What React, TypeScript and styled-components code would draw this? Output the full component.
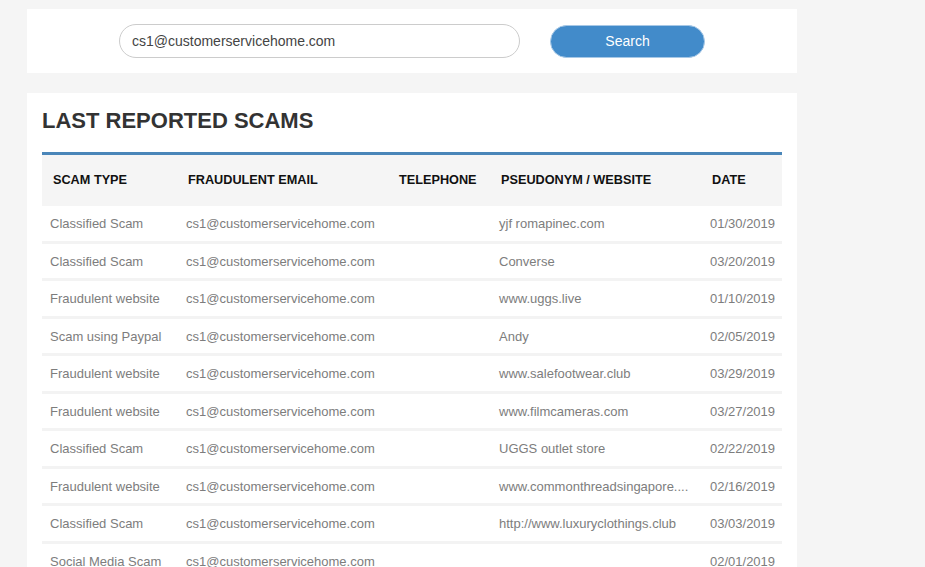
import React from "react";
import styled, { createGlobalStyle } from "styled-components";

const Global = createGlobalStyle`
  html, body { margin: 0; padding: 0; background: #f5f5f5; }
  body { font-family: "Liberation Sans", Arial, sans-serif; }
`;

const Page = styled.div`
  padding: 9px 0 0 27px;
  width: 770px;
  display: flex;
  flex-direction: column;
  gap: 20px;
`;

const SearchCard = styled.div`
  background: #fff;
  height: 64px;
  display: flex;
  align-items: center;
  justify-content: center;
  gap: 30px;
`;

const SearchInput = styled.input`
  box-sizing: border-box;
  width: 401px;
  height: 34px;
  border: 1px solid #cccccc;
  border-radius: 17px;
  padding: 0 12px;
  font: 14px "Liberation Sans", Arial, sans-serif;
  color: #444;
  outline: none;
  background: #fff;
`;

const SearchButton = styled.button`
  box-sizing: border-box;
  width: 155px;
  height: 33px;
  background: #428bca;
  border: 1px solid #a7c8e6;
  border-radius: 17px;
  color: #fff;
  font: 14px "Liberation Sans", Arial, sans-serif;
  cursor: pointer;
`;

const ListCard = styled.div`
  background: #fff;
  padding: 15px 15px 20px;
`;

const Title = styled.h2`
  margin: 0 0 19px;
  font-size: 22px;
  line-height: 25px;
  font-weight: bold;
  color: #333;
`;

const Table = styled.table`
  width: 740px;
  border-collapse: collapse;
  table-layout: fixed;
  border-top: 3px solid #4a86b9;
`;

const HeadRow = styled.tr`
  background: #f5f5f5;
`;

const Th = styled.th<{ $first?: boolean }>`
  padding: 18px 10px 18px ${(p) => (p.$first ? 11 : 10)}px;
  line-height: 15px;
  text-align: left;
  font-size: 12.7px;
  font-weight: bold;
  color: #111;
  text-transform: uppercase;
  white-space: nowrap;
`;

const Row = styled.tr`
  border-bottom: 3px solid #f3f3f3;
`;

const Td = styled.td`
  padding: 11px 8px 9.5px;
  line-height: 14px;
  font-size: 13px;
  color: #7d7d7d;
  white-space: nowrap;
  overflow: hidden;
`;

const rows = [
  ["Classified Scam", "yjf romapinec.com", "01/30/2019"],
  ["Classified Scam", "Converse", "03/20/2019"],
  ["Fraudulent website", "www.uggs.live", "01/10/2019"],
  ["Scam using Paypal", "Andy", "02/05/2019"],
  ["Fraudulent website", "www.salefootwear.club", "03/29/2019"],
  ["Fraudulent website", "www.filmcameras.com", "03/27/2019"],
  ["Classified Scam", "UGGS outlet store", "02/22/2019"],
  ["Fraudulent website", "www.commonthreadsingapore....", "02/16/2019"],
  ["Classified Scam", "http://www.luxuryclothings.club", "03/03/2019"],
  ["Social Media Scam", "", "02/01/2019"],
];

const EMAIL = "cs1@customerservicehome.com";

export default function App() {
  return (
    <>
      <Global />
      <Page>
        <SearchCard>
          <SearchInput defaultValue={EMAIL} />
          <SearchButton>Search</SearchButton>
        </SearchCard>
        <ListCard>
          <Title>LAST REPORTED SCAMS</Title>
          <Table>
            <colgroup>
              <col style={{ width: 136 }} />
              <col style={{ width: 211 }} />
              <col style={{ width: 102 }} />
              <col style={{ width: 211 }} />
              <col style={{ width: 80 }} />
            </colgroup>
            <thead>
              <HeadRow>
                <Th $first>Scam Type</Th>
                <Th>Fraudulent Email</Th>
                <Th>Telephone</Th>
                <Th>Pseudonym / Website</Th>
                <Th>Date</Th>
              </HeadRow>
            </thead>
            <tbody>
              {rows.map((r, i) => (
                <Row key={i}>
                  <Td>{r[0]}</Td>
                  <Td>{EMAIL}</Td>
                  <Td></Td>
                  <Td>{r[1]}</Td>
                  <Td>{r[2]}</Td>
                </Row>
              ))}
            </tbody>
          </Table>
        </ListCard>
      </Page>
    </>
  );
}
